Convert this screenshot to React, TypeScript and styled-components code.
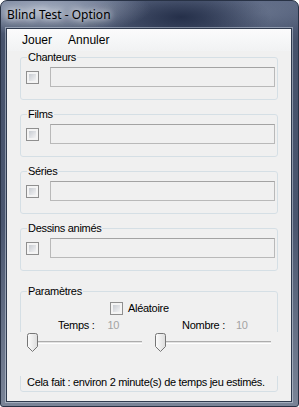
import React from 'react';
import styled, { createGlobalStyle } from 'styled-components';

const GlobalStyle = createGlobalStyle`
  html, body {
    margin: 0;
    padding: 0;
    background: #ffffff;
  }
  body {
    font-family: "Liberation Sans", Arial, sans-serif;
    font-size: 11px;
    letter-spacing: -0.3px;
    color: #000;
  }
`;

const Window = styled.div`
  box-sizing: border-box;
  width: 299px;
  height: 407px;
  display: flex;
  flex-direction: column;
  border: 1px solid #283245;
  border-radius: 7px 7px 3px 3px;
  overflow: hidden;
  background:
    radial-gradient(ellipse 110px 26px at 40px 8px, rgba(205, 214, 228, 0.65), transparent),
    radial-gradient(ellipse 90px 30px at 180px 16px, rgba(22, 32, 58, 0.75), transparent),
    radial-gradient(ellipse 60px 22px at 260px 12px, rgba(120, 132, 156, 0.45), transparent),
    linear-gradient(180deg, #5b6782 0%, #46526b 10%, #4a566f 55%, #7a8497 100%);
`;

const TitleBar = styled.div`
  flex: none;
  height: 27px;
  display: flex;
  align-items: center;
  padding: 0 0 1px 6px;
  box-sizing: border-box;
  font-family: "Noto Sans", "Open Sans", sans-serif;
  font-size: 12px;
  letter-spacing: 0;
  color: #000;
  text-shadow: 0 0 6px rgba(255, 255, 255, 0.95), 0 0 10px rgba(255, 255, 255, 0.7);
`;

const Client = styled.div`
  flex: 1;
  min-height: 0;
  margin: 0 6px 4px 5px;
  border: 1px solid #2f3a4e;
  box-shadow: 0 0 0 1px rgba(220, 228, 240, 0.45);
  background: #f0f0f0;
  display: flex;
  flex-direction: column;
  overflow: hidden;
`;

const MenuBar = styled.div`
  flex: none;
  height: 22px;
  display: flex;
  align-items: center;
  padding-left: 7px;
  background: linear-gradient(180deg, #fbfbfc 0%, #f5f6f7 60%, #f1f2f3 100%);
  font-size: 12px;
  letter-spacing: 0;
`;

const MenuItem = styled.span`
  padding: 0 8px;
  line-height: 18px;
`;

const Content = styled.div`
  display: flex;
  flex-direction: column;
  padding: 0 13px;
`;

const Group = styled.fieldset<{ $gap?: number; $padBottom?: number }>`
  margin: 0 0 ${p => p.$gap ?? 8}px 0;
  padding: 3px 2px ${p => p.$padBottom ?? 12}px 5px;
  border: 1px solid #d5dfe5;
  border-radius: 3px;
  min-width: 0;
`;

const Legend = styled.legend`
  margin-left: 1px;
  padding: 0 1px;
  font-size: 11px;
  line-height: 13px;
`;

const Row = styled.div`
  display: flex;
  align-items: center;
`;

const CheckBox = styled.span`
  box-sizing: border-box;
  width: 13px;
  height: 13px;
  flex: none;
  border: 1px solid #8f8f8f;
  padding: 2px;
  background: linear-gradient(135deg, #c8ccd2, #f3f3f4) content-box, #f4f4f4;
`;

const TextBox = styled.div`
  box-sizing: border-box;
  flex: 1;
  height: 20px;
  margin-left: 11px;
  border: 1px solid #b9b9b9;
  border-top-color: #a3a3a3;
  background: #f0f0f0;
`;

const CheckLabel = styled.span`
  margin-left: 5px;
  line-height: 13px;
`;

const ParamRow = styled.div<{ $top: number }>`
  display: flex;
  align-items: center;
  margin-top: ${p => p.$top}px;
  line-height: 13px;
  white-space: nowrap;
`;

const Spacer = styled.span<{ $w: number }>`
  margin-left: ${p => p.$w}px;
`;

const Value = styled.span<{ $left: number }>`
  margin-left: ${p => p.$left}px;
  color: #a3a3a3;
`;

const SliderRow = styled.div`
  display: flex;
  height: 44px;
  margin: 0 -8px 0 -8px;
  background: #f0f0f0;
`;

const Slider = styled.div<{ $left: number; $width: number }>`
  position: relative;
  margin-left: ${p => p.$left}px;
  width: ${p => p.$width}px;
  height: 100%;
`;

const Track = styled.div`
  position: absolute;
  left: 4px;
  right: 0;
  top: 9px;
  height: 3px;
  box-sizing: border-box;
  border-top: 1px solid #adadad;
  border-bottom: 1px solid #ffffff;
  background: #e3e3e3;
`;

const Thumb = styled.svg`
  position: absolute;
  top: 1px;
`;

const Footer = styled.div`
  margin-left: 1px;
  line-height: 13px;
  white-space: nowrap;
`;

const SliderThumb: React.FC<{ pos: number }> = ({ pos }) => (
  <Thumb width="11" height="19" viewBox="0 0 11 19" style={{ left: pos }}>
    <defs>
      <linearGradient id="tg" x1="0" y1="0" x2="1" y2="0">
        <stop offset="0" stopColor="#fdfdfd" />
        <stop offset="1" stopColor="#dcdcdc" />
      </linearGradient>
    </defs>
    <path
      d="M0.5 2.5 Q0.5 0.5 2.5 0.5 H8.5 Q10.5 0.5 10.5 2.5 V13.5 L5.5 18.5 L0.5 13.5 Z"
      fill="url(#tg)"
      stroke="#767676"
    />
  </Thumb>
);

const groups = ['Chanteurs', 'Films', 'Séries', 'Dessins animés'];

const App: React.FC = () => {
  return (
    <>
      <GlobalStyle />
      <Window>
        <TitleBar>Blind Test - Option</TitleBar>
        <Client>
          <MenuBar>
            <MenuItem>Jouer</MenuItem>
            <MenuItem>Annuler</MenuItem>
          </MenuBar>
          <Content>
            {groups.map((name, i) => (
              <Group key={name} $gap={i === groups.length - 1 ? 14 : 8}>
                <Legend>{name}</Legend>
                <Row>
                  <CheckBox />
                  <TextBox />
                </Row>
              </Group>
            ))}
            <Group $padBottom={2}>
              <Legend>Paramètres</Legend>
              <ParamRow $top={1}>
                <Spacer $w={84} />
                <CheckBox />
                <CheckLabel>Aléatoire</CheckLabel>
              </ParamRow>
              <ParamRow $top={4}>
                <Spacer $w={32} />
                <span>Temps :</span>
                <Value $left={13}>10</Value>
                <Spacer $w={63} />
                <span>Nombre :</span>
                <Value $left={11}>10</Value>
              </ParamRow>
              <SliderRow>
                <Slider $left={9} $width={115}>
                  <Track />
                  <SliderThumb pos={0} />
                </Slider>
                <Slider $left={13} $width={116}>
                  <Track />
                  <SliderThumb pos={0} />
                </Slider>
              </SliderRow>
              <Footer>Cela fait : environ 2 minute(s) de temps jeu estimés.</Footer>
            </Group>
          </Content>
        </Client>
      </Window>
    </>
  );
};

export default App;
